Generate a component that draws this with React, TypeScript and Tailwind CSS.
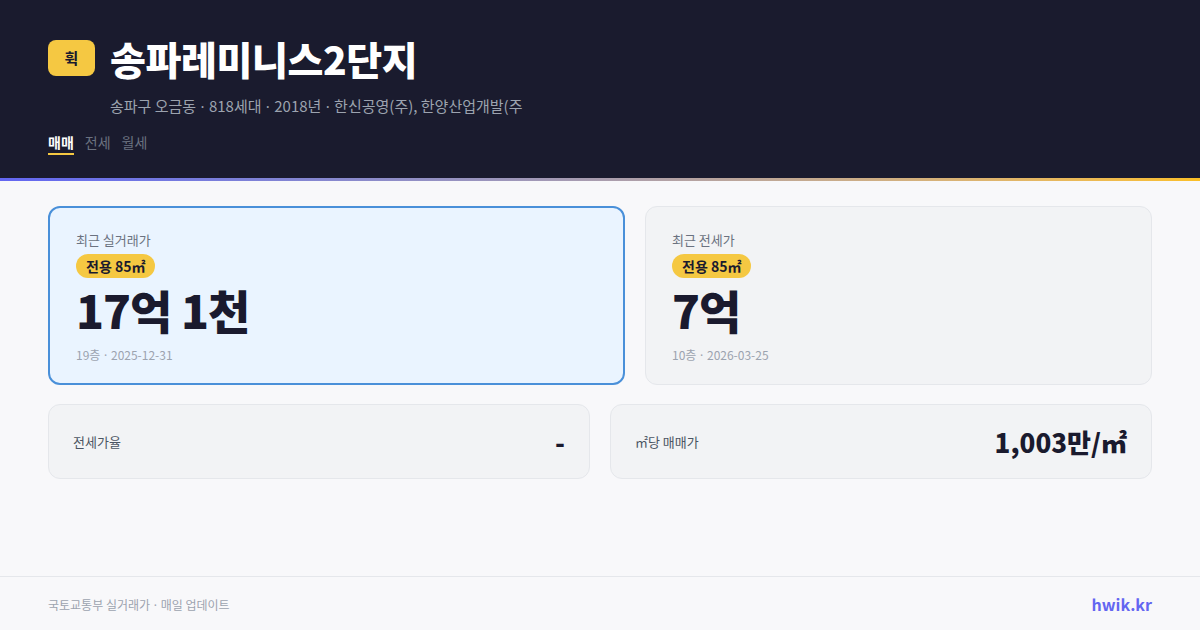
import React from "react";

const Dot = () => (
	<span className="mx-[1px]" style={{ fontFamily: '"Noto Sans", sans-serif' }}>
		·
	</span>
);

const Pill = ({ children }: { children: React.ReactNode }) => (
	<span className="inline-flex h-[24px] items-center rounded-full bg-[#f5c842] px-[10px] text-[14px] font-bold leading-none text-[#1a1a2e]">
		{children}
	</span>
);

const PriceCard = ({
	label,
	price,
	meta,
	highlight,
	className,
}: {
	label: string;
	price: string;
	meta: React.ReactNode;
	highlight?: boolean;
	className?: string;
}) => (
	<div
		className={
			(highlight
				? "border-2 border-[#4a90d9] bg-[#eaf4ff] px-[26px] pt-[23px] "
				: "border border-[#e5e7eb] bg-[#f2f3f5] px-[26px] pt-[24px] ") +
			"flex h-[179px] flex-col rounded-[12px] " +
			(className ?? "")
		}
	>
		<div className="text-[13px] leading-[18px] text-[#6b7280]">{label}</div>
		<div className="mt-[4px]">
			<Pill>전용 85㎡</Pill>
		</div>
		<div className="mt-[7px] text-[46px] font-black leading-[48px] tracking-[-1px] text-[#1a1a2e]">{price}</div>
		<div className="mt-[14px] text-[12px] leading-[16px] text-[#9ca3af]">{meta}</div>
	</div>
);

const StatCard = ({ label, value }: { label: string; value: string }) => (
	<div className="flex h-[75px] flex-1 items-center justify-between rounded-[12px] border border-[#e5e7eb] bg-[#f2f3f5] px-[24px]">
		<span className="text-[13px] text-[#4b5563]">{label}</span>
		<span className="text-[26px] font-extrabold leading-none text-[#1a1a2e]">{value}</span>
	</div>
);

export default function App() {
	return (
		<div
			className="flex h-[630px] w-[1200px] flex-col bg-[#f8f8fa]"
			style={{ fontFamily: '"Noto Sans CJK KR", "Noto Sans", sans-serif' }}
		>
			<header className="h-[178px] bg-[#1a1b2e] px-[48px] pt-[35px]">
				<div className="flex items-center gap-[15px]">
					<div className="flex h-[36px] w-[47px] items-center justify-center rounded-[8px] bg-[#f5c842] text-[15px] font-bold text-[#1a1a2e]">
						휙
					</div>
					<h1 className="text-[39px] font-black leading-[46px] tracking-[-0.4px] text-white">송파레미니스2단지</h1>
				</div>
				<div className="mt-[14px] pl-[62px] text-[15px] leading-[22px] text-[#9ca3af]">
					송파구 오금동 <Dot /> 818세대 <Dot /> 2018년 <Dot /> 한신공영(주), 한양산업개발(주
				</div>
				<nav className="mt-[15px] flex gap-[11px] text-[14px] leading-[20px]">
					<span className="border-b-2 border-[#f5c842] pb-[1px] font-bold text-white">매매</span>
					<span className="text-[#6b7280]">전세</span>
					<span className="text-[#6b7280]">월세</span>
				</nav>
			</header>
			<div className="h-[3px] bg-gradient-to-r from-[#6366f1] to-[#fbbf24]" />
			<main className="flex flex-1 flex-col gap-[19px] px-[48px] pt-[25px]">
				<div className="flex gap-[20px]">
					<PriceCard
						highlight
						className="w-[577px]"
						label="최근 실거래가"
						price="17억 1천"
						meta={
							<>
								19층 <Dot /> 2025-12-31
							</>
						}
					/>
					<PriceCard
						className="flex-1"
						label="최근 전세가"
						price="7억"
						meta={
							<>
								10층 <Dot /> 2026-03-25
							</>
						}
					/>
				</div>
				<div className="flex gap-[20px]">
					<StatCard label="전세가율" value="-" />
					<StatCard label="㎡당 매매가" value="1,003만/㎡" />
				</div>
			</main>
			<footer className="flex h-[54px] items-center justify-between border-t border-[#e5e7eb] px-[48px]">
				<span className="pt-[3px] text-[12px] text-[#9ca3af]">
					국토교통부 실거래가 <Dot /> 매일 업데이트
				</span>
				<span className="text-[16px] font-bold text-[#6366f1]">hwik.kr</span>
			</footer>
		</div>
	);
}
